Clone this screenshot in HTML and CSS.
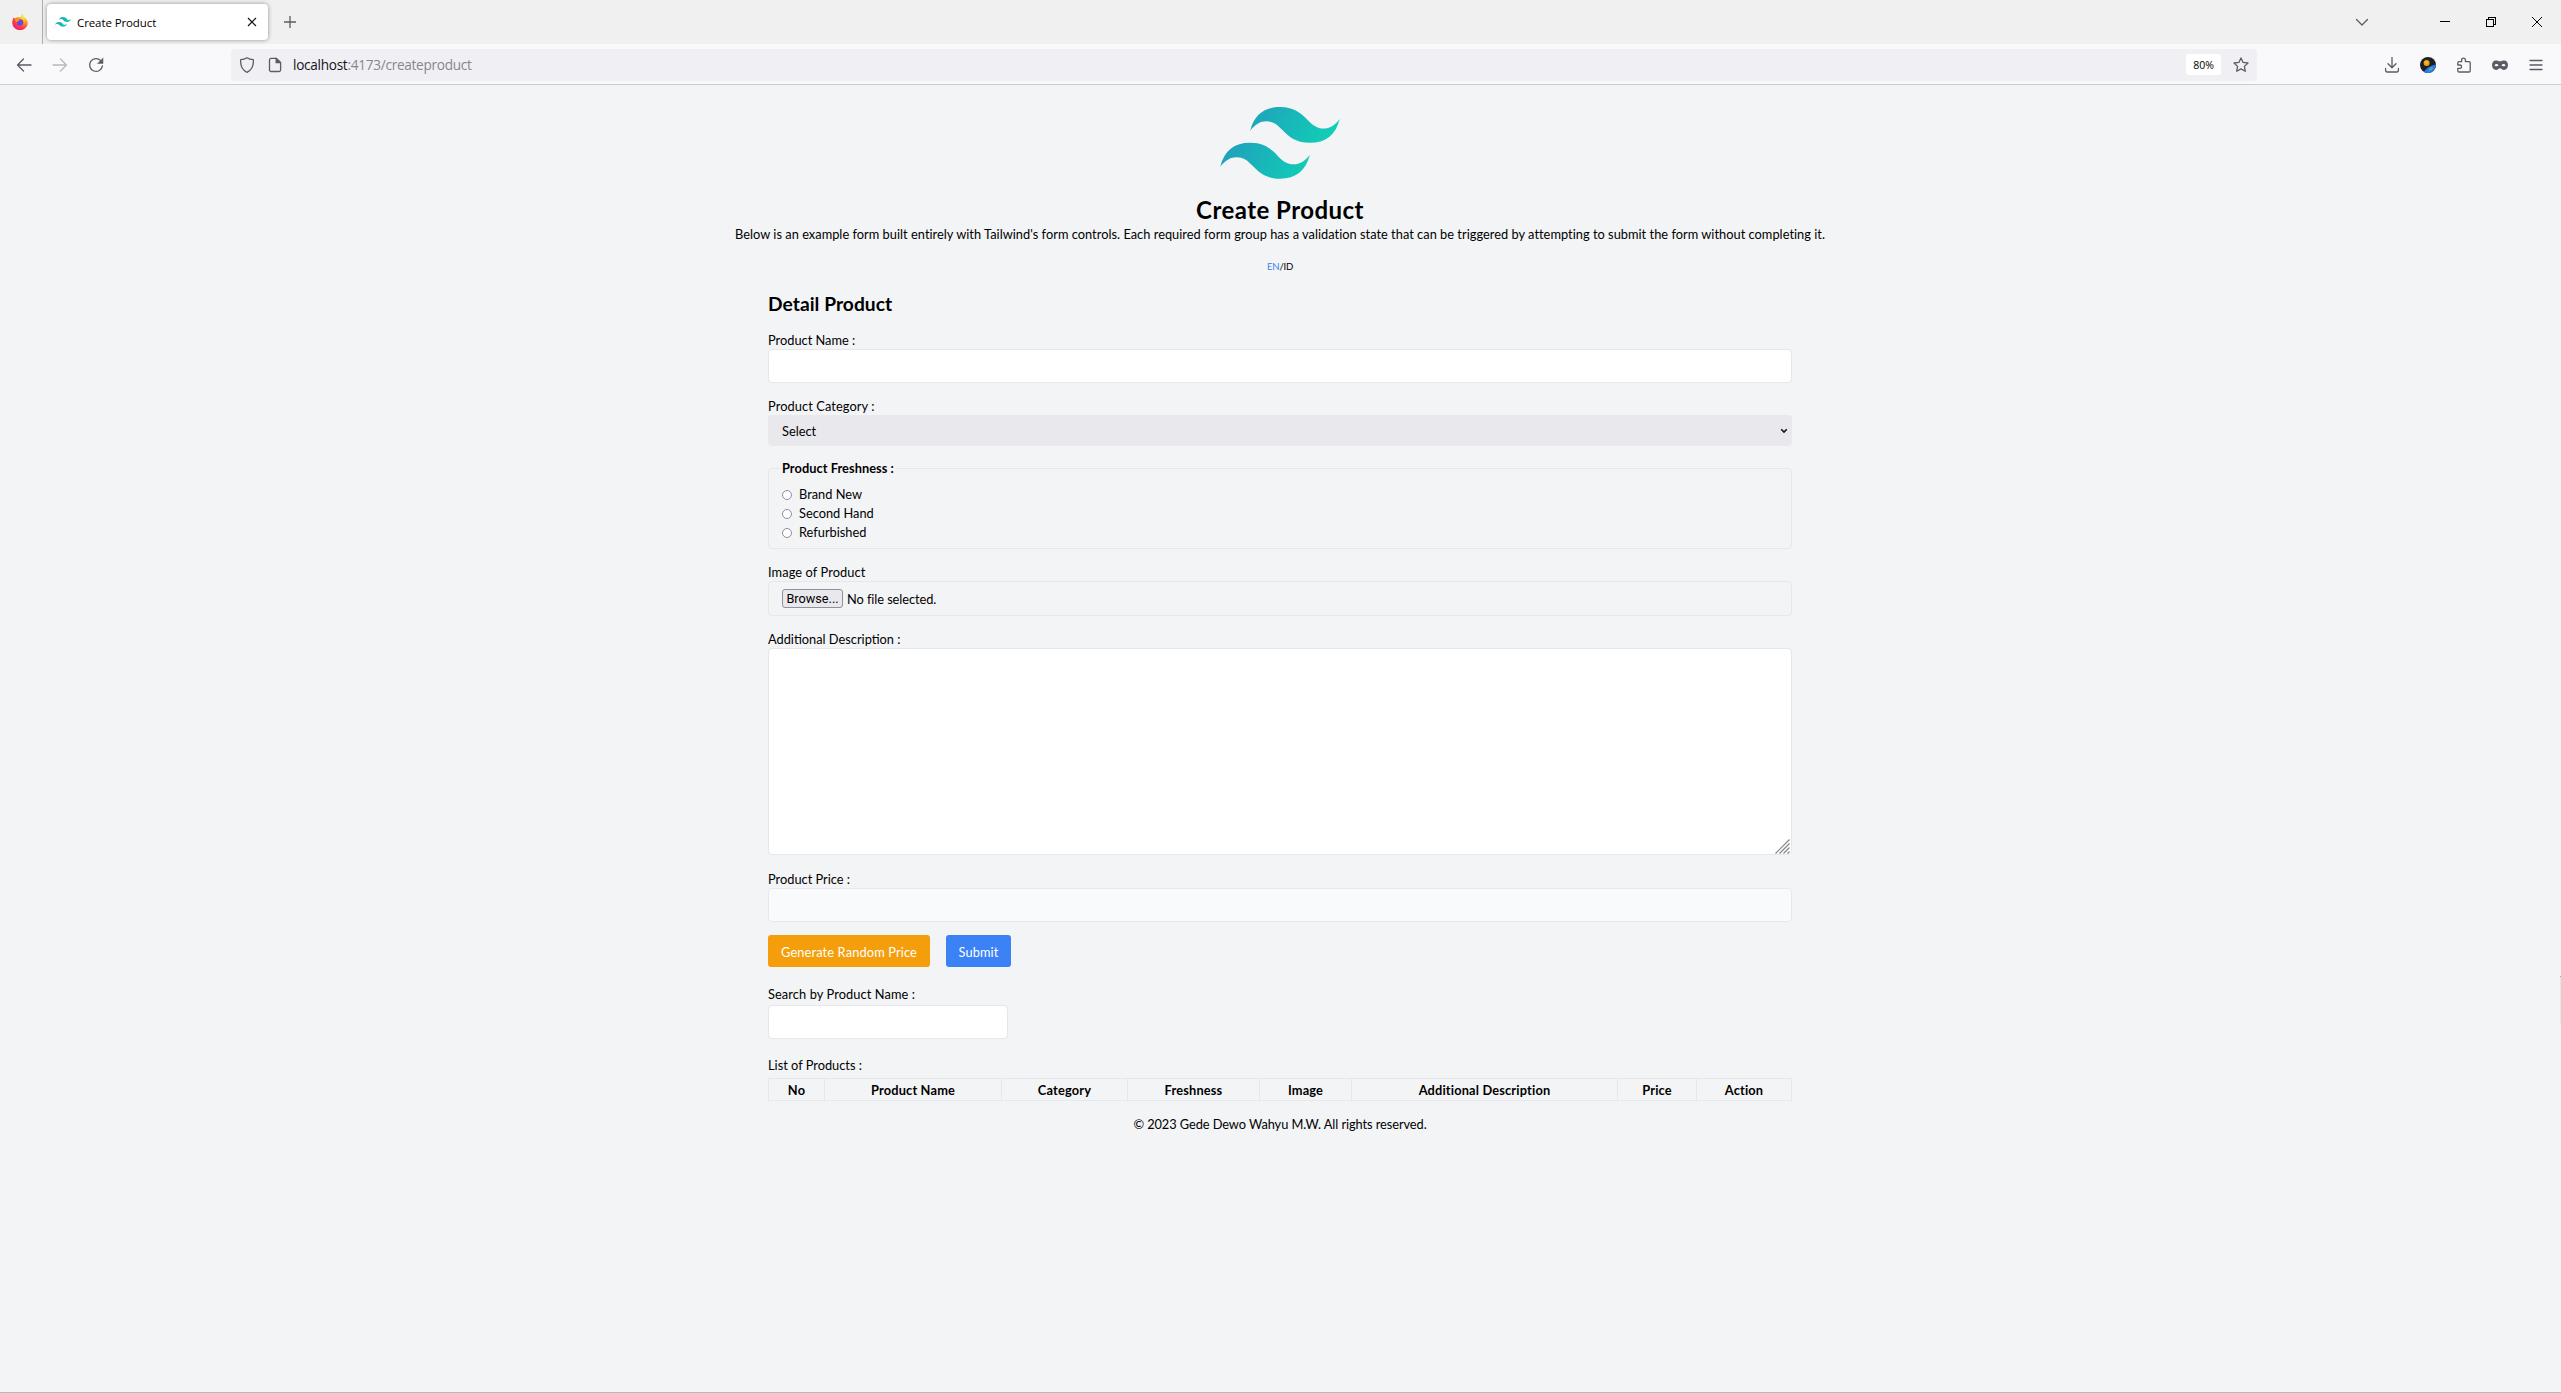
FILE: index.html
```
<!DOCTYPE html>
<html lang="en">
<head>
<meta charset="utf-8">
<title>Create Product</title>
<link rel="stylesheet" href="styles.css">
</head>
<body>
<svg width="0" height="0" class="defs">
  <defs>
    <linearGradient id="wave" x1="-2.8%" y1="32%" x2="100%" y2="67.2%"><stop offset="0" stop-color="#2298BD"/><stop offset="1" stop-color="#0ED7B5"/></linearGradient>
    <symbol id="logo" viewBox="0 0 54 33"><path fill="url(#wave)" fill-rule="evenodd" d="M27 0c-7.2 0-11.7 3.6-13.5 10.8 2.7-3.6 5.85-4.95 9.45-4.05 2.054.513 3.522 2.004 5.147 3.653C30.744 13.09 33.808 16.2 40.5 16.2c7.2 0 11.7-3.6 13.5-10.8-2.7 3.6-5.85 4.95-9.45 4.05-2.054-.513-3.522-2.004-5.147-3.653C36.756 3.11 33.692 0 27 0zM13.5 16.2C6.3 16.2 1.8 19.8 0 27c2.7-3.6 5.85-4.95 9.45-4.05 2.054.514 3.522 2.004 5.147 3.653C17.244 29.29 20.308 32.4 27 32.4c7.2 0 11.7-3.6 13.5-10.8-2.7 3.6-5.85 4.95-9.45 4.05-2.054-.513-3.522-2.004-5.147-3.653C23.256 19.31 20.192 16.2 13.5 16.2z"/></symbol>
    <radialGradient id="fox" cx=".75" cy=".15" r="1"><stop offset="0" stop-color="#fff44f"/><stop offset=".4" stop-color="#ff980e"/><stop offset=".72" stop-color="#ff3647"/><stop offset="1" stop-color="#e31587"/></radialGradient>
  </defs>
</svg>

<header class="tabstrip">
  <div class="pinned">
    <svg width="16" height="16" viewBox="0 0 16 16"><path fill="url(#fox)" d="M1.6 3.6 3 4.6C3.7 3.9 4.6 3.4 5.6 3.2L9 3C9.2 1.8 9.7.8 10.6.1c.3 1.5 1.2 2.2 2.3 3.3C14.6 4.9 15.7 6.700 15.700 9A7.700 7.200 0 0 1 .3 9C.3 7 .8 5.200 1.600 3.600z"/><circle cx="8" cy="8.600" r="3.300" fill="#7542e5"/><path fill="#ff980e" d="M3 5.500c2-.8 3.600-.3 5 .8-1.500.2-2.500.9-2.600 1.900C4 8 3 7 3 5.500z"/></svg>
  </div>
  <div class="tab">
    <svg width="16" height="16"><use href="#logo"/></svg>
    <span class="tab-title">Create Product</span>
    <svg width="10" height="10" viewBox="0 0 10 10" class="ink"><path d="M1 1l8 8M9 1l-8 8"/></svg>
  </div>
  <svg class="plus line" width="12" height="12" viewBox="0 0 12 12"><path d="M6 0v12M0 6h12"/></svg>
  <div class="window-controls">
    <svg class="line" width="14" height="14" viewBox="0 0 14 14"><path d="M1.500 4.500 7 10l5.500-5.500"/></svg>
    <svg class="sharp" width="10" height="10" viewBox="0 0 10 10"><path d="M0 4.500h10"/></svg>
    <svg class="sharp" width="10" height="10" viewBox="0 0 10 10"><path d="M.5 2.500h7v7h-7zM2.500 2.500v-2h7v7h-2"/></svg>
    <svg class="sharp smooth" width="10" height="10" viewBox="0 0 10 10"><path d="M0 0l10 10M10 0L0 10"/></svg>
  </div>
</header>

<nav class="toolbar">
  <div class="nav-buttons line">
    <svg width="16" height="16" viewBox="0 0 16 16"><path d="M15 8H1.500M7.500 2l-6 6 6 6"/></svg>
    <svg class="disabled" width="16" height="16" viewBox="0 0 16 16"><path d="M1 8h13.500M8.500 2l6 6-6 6"/></svg>
    <svg width="16" height="16" viewBox="0 0 16 16"><path d="M12.700 3.600A6.400 6.400 0 1 0 14.400 8.800"/><path class="solid" d="M15 1.200v5.300H9.700z"/></svg>
  </div>
  <div class="urlbar">
    <svg class="line" width="16" height="16" viewBox="0 0 16 16"><path d="M8 .8C6.200 2 4 2.600 1.700 2.700 1.200 8.500 3.200 13 8 15.300c4.800-2.300 6.800-6.800 6.300-12.600C12 2.600 9.800 2 8 .8z"/></svg>
    <svg class="line" width="14" height="16" viewBox="0 0 14 16"><path d="M3 1.400h5.500L12.600 5.500V13a1.500 1.500 0 0 1-1.500 1.500H3A1.500 1.500 0 0 1 1.500 13V2.900A1.500 1.500 0 0 1 3 1.400z"/><path class="solid" d="M8 1l5 5H8z"/></svg>
    <span class="url">localhost<span class="path">:4173/createproduct</span></span>
    <span class="zoom">80%</span>
    <svg class="line star" width="16" height="16" viewBox="0 0 16 16"><path d="M8 .9l2.100 4.500 4.900.6-3.600 3.400.9 4.900L8 11.900l-4.300 2.400.9-4.900L1 6l4.900-.6z"/></svg>
  </div>
  <div class="tools line">
    <svg width="16" height="16" viewBox="0 0 16 16"><path d="M8 .5v10M4 6.800l4 4 4-4M1.600 11.500v2A1.500 1.500 0 0 0 3 15h10a1.500 1.500 0 0 0 1.400-1.500v-2"/></svg>
    <svg class="plain" width="16" height="16" viewBox="0 0 16 16"><circle cx="8" cy="8" r="8" fill="#1c2028"/><circle cx="6.600" cy="6" r="3" fill="#f2a20d"/><path fill="#f5c94a" d="M5.500 4.500h2v2h-2z"/><path fill="#2b7de0" d="M4 15C6 11.500 10 8.600 15.800 7.500A8 8 0 0 1 4 15z"/><path fill="#5fc08a" d="M9 12.500l3-2.500 1 1-3.500 3z"/></svg>
    <svg width="16" height="16" viewBox="0 0 16 16"><path d="M3 4.700h2.600V3a1.900 1.900 0 0 1 3.800 0v1.700H13a1.200 1.200 0 0 1 1.200 1.200v8A1.200 1.200 0 0 1 13 15H3a1.200 1.200 0 0 1-1.200-1.200v-2.500h2.100a1.600 1.600 0 0 0 0-3.300H1.800V5.900A1.200 1.200 0 0 1 3 4.700z"/></svg>
    <svg class="plain" width="16" height="16" viewBox="0 0 16 16"><path fill="#5b5b66" fill-rule="evenodd" d="M4 3.500c1.800 0 2.700.8 4 .8s2.200-.8 4-.8c2.500 0 4 1.800 4 4.500s-1.600 4.900-4 4.900c-2 0-2.900-1.700-4-1.700s-2 1.700-4 1.700c-2.400 0-4-2.200-4-4.900s1.500-4.500 4-4.500zM2.500 8.200c.5 1.200 3 1.500 4 .3-.5-2-3-2.200-4-.3zm11 0c-.5 1.200-3 1.500-4 .3.500-2 3-2.200 4-.3z"/></svg>
    <svg width="16" height="16" viewBox="0 0 16 16"><path d="M2 3.500h12M2 8h12M2 12.500h12"/></svg>
  </div>
</nav>

<main class="page">
  <svg class="brand" width="120" height="73"><use href="#logo"/></svg>
  <h1>Create Product</h1>
  <p class="intro">Below is an example form built entirely with Tailwind's form controls. Each required form group has a validation state that can be triggered by attempting to submit the form without completing it.</p>
  <p class="lang"><a>EN</a>/ID</p>

  <form class="form">
    <h2>Detail Product</h2>
    <label class="field"><span>Product Name :</span><input type="text" class="box"></label>
    <label class="field"><span class="wide">Product Category :</span>
      <span class="select"><span>Select</span><svg width="8" height="6" viewBox="0 0 8 6"><path d="M1.200 1.200 4 4l2.800-2.800"/></svg></span>
    </label>
    <fieldset>
      <legend>Product Freshness :</legend>
      <label><input type="radio" name="fresh">Brand New</label>
      <label><input type="radio" name="fresh">Second Hand</label>
      <label><input type="radio" name="fresh">Refurbished</label>
    </fieldset>
    <div class="field"><span class="wide">Image of Product</span>
      <div class="file"><button type="button">Browse...</button><span>No file selected.</span></div>
    </div>
    <label class="field"><span>Additional Description :</span>
      <span class="area"><textarea></textarea><svg width="15" height="15" viewBox="0 0 15 15"><path d="M.5 14.500l14-14M4.500 14.500l10-10M8.500 14.500l6-6M12.500 14.500l2-2"/></svg></span>
    </label>
    <label class="field"><span>Product Price :</span><input type="text" class="box price" disabled></label>
    <div class="actions"><button type="button" class="btn generate">Generate Random Price</button><button type="button" class="btn submit">Submit</button></div>
    <label class="field search"><span class="wide">Search by Product Name :</span><input type="text" class="box"></label>
    <div class="list-title">List of Products :</div>
    <table>
      <colgroup><col class="c-no"><col class="c-name"><col class="c-cat"><col class="c-fresh"><col class="c-img"><col class="c-desc"><col class="c-price"><col></colgroup>
      <tr><th>No</th><th>Product Name</th><th>Category</th><th>Freshness</th><th>Image</th><th>Additional Description</th><th>Price</th><th>Action</th></tr>
    </table>
  </form>
  <footer>© 2023 Gede Dewo Wahyu M.W. All rights reserved.</footer>
  <i class="edge"></i>
</main>
</body>
</html>
```
FILE: styles.css
```
* { box-sizing: border-box; }
body {
  margin: 0;
  height: 1393px;
  overflow: hidden;
  display: flex;
  flex-direction: column;
  background: #f3f4f6;
  color: #000;
  font: 12.8px/18px Lato, "Open Sans", sans-serif;
}
svg { display: block; flex: none; }
.defs { position: absolute; }
h1, h2, p { margin: 0; }

/* browser chrome */
.tabstrip, .toolbar { font-family: "Open Sans", "Noto Sans", sans-serif; }
.tabstrip { height: 44px; display: flex; align-items: center; background: #f0f0f0; flex: none; }
.pinned { width: 43px; height: 44px; padding: 14px 0 0 12px; border-right: 1px solid #adadb0; }
.tab {
  width: 221px;
  height: 36px;
  margin-left: 4px;
  padding: 0 11px 0 8px;
  display: flex;
  align-items: center;
  background: #fff;
  border-radius: 4px;
  box-shadow: 0 0 4px rgba(0, 0, 0, .4);
}
.tab-title { flex: 1; margin-left: 6px; padding-top: 1px; font-size: 11.5px; letter-spacing: -.1px; }
.line path { fill: none; stroke: #5b5b66; stroke-width: 1.3; stroke-linecap: round; stroke-linejoin: round; }
.line .plain path { stroke: none; }
.line .plain path[fill] { fill: revert-layer; }
.line .solid { fill: #5b5b66; stroke-width: .5; }
.ink path { fill: none; stroke: #15141a; stroke-width: 1.2; }
.plus { margin-left: 16px; }
.window-controls { margin-left: auto; margin-right: 19px; display: flex; align-items: center; }
.window-controls svg + svg { margin-left: 36px; }
.window-controls svg:first-child + svg { margin-left: 71px; }
.sharp path { fill: none; stroke: #000; stroke-width: 1; shape-rendering: crispEdges; }
.smooth path { shape-rendering: auto; }

.toolbar { height: 41px; padding-top: 1px; display: flex; align-items: center; background: #f9f9fb; border-bottom: 1px solid #cccccf; flex: none; }
.nav-buttons { display: flex; gap: 20px; padding-left: 16px; width: 231px; }
.disabled { opacity: .4; }
.urlbar { width: 2026px; height: 32px; padding: 0 8px; display: flex; align-items: center; background: #f0f0f4; border-radius: 4px; }
.urlbar svg + svg { margin-left: 13px; }
.url { flex: 1; margin-left: 11px; padding-top: 1px; font-size: 13.6px; letter-spacing: -.28px; color: #15141a; }
.path { color: #86868e; }
.zoom { width: 35px; height: 21px; border-radius: 3px; background: #fff; text-align: center; font-size: 10.5px; line-height: 22px; }
.urlbar .star { margin-left: 12px; }
.tools { margin-left: auto; margin-right: 17px; display: flex; gap: 20px; }

/* page */
.page { flex: 1; display: flex; flex-direction: column; align-items: center; padding: 22px 1px 0 0; border-bottom: 1px solid #b4bbbe; position: relative; }
.edge { position: absolute; right: 0; top: 891px; width: 1px; height: 48px; background: #dcebe9; border-top: 1px solid #9fa8a8; }
h1 { margin-top: 15px; font-size: 24px; line-height: 29px; font-weight: 700; letter-spacing: .45px; }
.intro { line-height: 20px; letter-spacing: .025px; white-space: nowrap; }
.lang { margin-top: 16px; font-size: 9.6px; line-height: 13px; letter-spacing: -.25px; }
.lang a { color: #3b82f6; }
.form { width: 1024px; margin-top: 19px; }
h2 { font-size: 19.2px; line-height: 23px; font-weight: 700; margin-bottom: 16px; letter-spacing: .05px; }
.field { display: block; margin-bottom: 14px; }
.field > span:first-child { display: block; height: 18px; }
.wide { letter-spacing: .1px; }
.box { display: block; width: 100%; height: 34px; background: #fff; border: 1px solid #e5e7eb; border-radius: 4px; }
.select { display: flex; align-items: center; justify-content: space-between; height: 31px; padding: 1px 4px 0 14px; background: #e9e9ed; border-radius: 4px; }
.select path { fill: none; stroke: #15141a; stroke-width: 1.600; }
fieldset { margin: -1px 0 14px; padding: 8px 13px 6px; border: 1px solid #e5e7eb; border-radius: 4px; }
legend { padding: 0 2px 0 0; font-weight: 700; letter-spacing: .05px; }
fieldset label { display: flex; align-items: center; line-height: 19px; }
fieldset input { appearance: none; width: 10px; height: 10px; margin: 1px 7px 0 0; border: 1px solid #8f8f9d; border-radius: 50%; background: #fff; }
.file { display: flex; align-items: center; gap: 4px; height: 35px; padding: 0 13px; border: 1px solid #e5e7eb; border-radius: 4px; }
.file button { width: 61px; height: 19px; padding: 0; border: 1px solid #8f8f9d; border-radius: 3px; background: #e9e9ed; color: #000; font: 12.700px/16px Roboto, sans-serif; }
.file span { letter-spacing: -.07px; padding-top: 1px; }
.area { display: block; position: relative; height: 207px; margin-bottom: 15px; }
.area textarea { display: block; width: 100%; height: 100%; resize: none; border: 1px solid #e5e7eb; border-radius: 4px; background: #fff; }
.area svg { position: absolute; right: 2px; bottom: 1px; }
.area path { fill: none; stroke: #85858c; stroke-width: 1.200; }
.price { background: #f9fafb; }
.actions { display: flex; gap: 16px; margin: -1px 0 18px; }
.btn { height: 32px; padding: 2px 0 0; border: 0; border-radius: 3px; color: #fff; font: 12.8px/18px Lato, sans-serif; letter-spacing: .14px; }
.generate { width: 162px; background: #f59e0b; }
.submit { width: 65px; background: #3b82f6; }
.search { margin-bottom: 17px; }
.search .box { width: 240px; margin-top: 2px; }
.list-title { height: 22px; }
table { width: 1024px; table-layout: fixed; border-collapse: collapse; }
th { height: 22px; padding: 0; border: 1px solid #e5e7eb; line-height: 20px; letter-spacing: .17px; }
.c-no { width: 56px; }
.c-name { width: 177px; }
.c-cat { width: 126px; }
.c-fresh { width: 132px; }
.c-img { width: 92px; }
.c-desc { width: 266px; }
.c-price { width: 79px; }
footer { margin-top: 14px; letter-spacing: -.07px; }
```
